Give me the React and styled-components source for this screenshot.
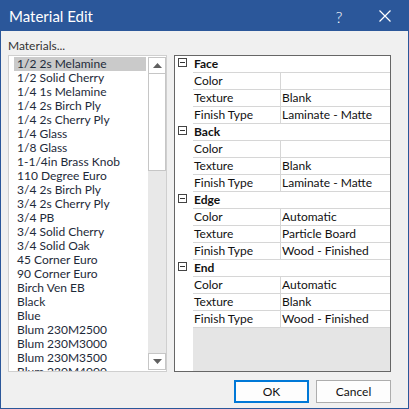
import React from "react";
import styled, { createGlobalStyle } from "styled-components";

const Global = createGlobalStyle`
  html, body { margin: 0; padding: 0; background: #f0f0f0; }
  body { font-family: "Segoe UI", Lato, "Noto Sans", sans-serif; font-size: 12px; color: #1e1e1e; }
  * { box-sizing: border-box; }
`

const Window = styled.div`
  width: 409px;
  height: 409px;
  border: 1px solid #2b579a;
  background: #f0f0f0;
  display: flex;
  flex-direction: column;
  overflow: hidden;
`
const TitleBar = styled.div`
  height: 30px;
  flex: none;
  background: #2b579a;
  color: #fff;
  display: flex;
  align-items: center;
  padding-left: 8px;
  font-size: 15px;
`
const TitleText = styled.span`
  flex: 1;
  padding-bottom: 1px;
`
const CaptionButton = styled.div`
  width: 46px;
  height: 30px;
  display: flex;
  align-items: center;
  justify-content: center;
  color: #fff;
  font-size: 16px;
  font-weight: 300;
`
const Body = styled.div`
  flex: 1;
  padding: 0 17px 0 7px;
  display: grid;
  grid-template-columns: 159px 217px;
  grid-template-rows: 24px 317px;
  column-gap: 7px;
`
const Label = styled.div`
  grid-column: 1 / 3;
  padding-top: 7px;
  line-height: 16px;
  color: #333;
`
const ListBox = styled.div`
  border: 1px solid #cfcfcf;
  background: #fff;
  display: flex;
  overflow: hidden;
`
const Items = styled.div`
  width: 138px;
  padding: 1px 0 0 5px;
  overflow: hidden;
`
const Item = styled.div`
  height: 14px;
  line-height: 14px;
  padding-left: 3px;
  white-space: nowrap;
  color: #1e2a3a;
  background: ${p => (p.$selected ? "#cacaca" : "transparent")};
  margin-right: 1px;
`
const ScrollBar = styled.div`
  width: 18px;
  margin: 1px 0 1px 1px;
  background: #e8e8e8;
  display: flex;
  flex-direction: column;
`
const ScrollButton = styled.div`
  height: 17px;
  flex: none;
  background: #fff;
  border: 1px solid #c6c6c6;
  display: flex;
  align-items: center;
  justify-content: center;
`
const Thumb = styled.div`
  height: 98px;
  flex: none;
  margin-top: -1px;
  background: #fff;
  border: 1px solid #c6c6c6;
`
const Track = styled.div`
  flex: 1;
`
const PropGrid = styled.div`
  border: 1px solid #666;
  background: #e5e5e5;
  display: flex;
  flex-direction: column;
  overflow: hidden;
`
const Row = styled.div`
  display: grid;
  grid-template-columns: 18px 88px 1fr;
  height: 17px;
  flex: none;
`
const Gutter = styled.div`
  background: #fff;
  padding: 2px 0 0 3px;
`
const Cell = styled.div`
  background: #fff;
  border-bottom: 1px solid #d6d6d6;
  border-right: ${p => (p.$divider ? "1px solid #d6d6d6" : "none")};
  padding-left: 1px;
  line-height: 16px;
  white-space: nowrap;
  color: #111;
  font-weight: ${p => (p.$bold ? 700 : 400)};
  grid-column: ${p => (p.$span ? "2 / 4" : "auto")};
`
const Filler = styled.div`
  flex: 1;
  display: grid;
  grid-template-columns: 18px 1fr;
`
const Minus = styled.div`
  width: 9px;
  height: 9px;
  border: 1px solid #444;
  display: flex;
  align-items: center;
  justify-content: center;
  &::after {
    content: "";
    width: 5px;
    height: 1px;
    background: #333;
  }
`
const Footer = styled.div`
  height: 36px;
  flex: none;
  padding: 8px 17px 0 0;
  display: flex;
  justify-content: flex-end;
  gap: 7px;
`
const Button = styled.button`
  width: 75px;
  height: 23px;
  font-family: inherit;
  font-size: 12px;
  color: #111;
  background: #fdfdfd;
  border: 1px solid ${p => (p.$primary ? "#0078d7" : "#adadad")};
  box-shadow: ${p => (p.$primary ? "inset 0 0 0 1px #0078d7" : "none")};
  padding: 0;
`

const materials = [
  "1/2 2s Melamine", "1/2 Solid Cherry", "1/4 1s Melamine", "1/4 2s Birch Ply",
  "1/4 2s Cherry Ply", "1/4 Glass", "1/8 Glass", "1-1/4in Brass Knob",
  "110 Degree Euro", "3/4 2s Birch Ply", "3/4 2s Cherry Ply", "3/4 PB",
  "3/4 Solid Cherry", "3/4 Solid Oak", "45 Corner Euro", "90 Corner Euro",
  "Birch Ven EB", "Black", "Blue", "Blum 230M2500", "Blum 230M3000",
  "Blum 230M3500", "Blum 230M4000",
]

const sections = [
  { name: "Face", color: "", texture: "Blank", finish: "Laminate - Matte" },
  { name: "Back", color: "", texture: "Blank", finish: "Laminate - Matte" },
  { name: "Edge", color: "Automatic", texture: "Particle Board", finish: "Wood - Finished" },
  { name: "End", color: "Automatic", texture: "Blank", finish: "Wood - Finished" },
]

function Arrow({ down }) {
  return (
    <svg width="9" height="5" viewBox="0 0 9 5">
      <polygon points={down ? "0,0 9,0 4.5,5" : "0,5 9,5 4.5,0"} fill="#606060" />
    </svg>
  )
}

export default function App() {
  return (
    <Window>
      <Global />
      <TitleBar>
        <TitleText>Material Edit</TitleText>
        <CaptionButton>?</CaptionButton>
        <CaptionButton>
          <svg width="12" height="12" viewBox="0 0 12 12">
            <path d="M0.5 0.5 L11.5 11.5 M11.5 0.5 L0.5 11.5" stroke="#fff" strokeWidth="1.2" />
          </svg>
        </CaptionButton>
      </TitleBar>
      <Body>
        <Label>Materials...</Label>
        <ListBox>
          <Items>
            {materials.map((m, i) => (
              <Item key={m} $selected={i === 0}>{m}</Item>
            ))}
          </Items>
          <ScrollBar>
            <ScrollButton><Arrow /></ScrollButton>
            <Thumb />
            <Track />
            <ScrollButton><Arrow down /></ScrollButton>
          </ScrollBar>
        </ListBox>
        <PropGrid>
          {sections.map(s => (
            <React.Fragment key={s.name}>
              <Row>
                <Gutter><Minus /></Gutter>
                <Cell $span $bold>{s.name}</Cell>
              </Row>
              {[["Color", s.color], ["Texture", s.texture], ["Finish Type", s.finish]].map(([k, v]) => (
                <Row key={k}>
                  <Gutter />
                  <Cell $divider>{k}</Cell>
                  <Cell>{v}</Cell>
                </Row>
              ))}
            </React.Fragment>
          ))}
          <Filler>
            <Gutter />
            <div />
          </Filler>
        </PropGrid>
      </Body>
      <Footer>
        <Button $primary>OK</Button>
        <Button>Cancel</Button>
      </Footer>
    </Window>
  )
}
